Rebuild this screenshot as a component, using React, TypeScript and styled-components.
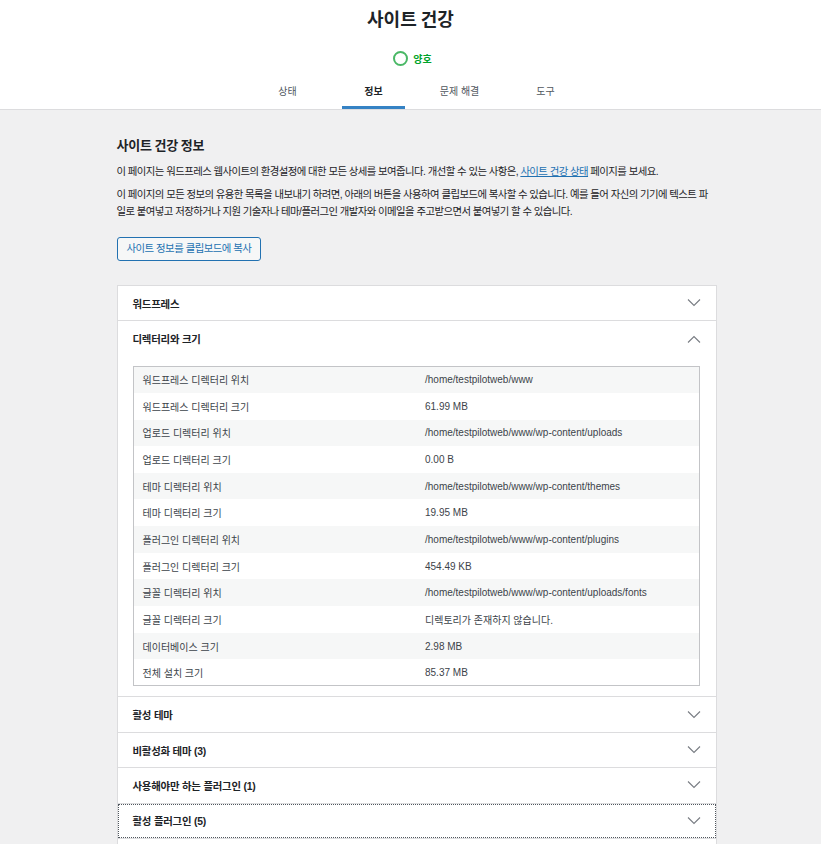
import React from "react";
import styled, { createGlobalStyle, css } from "styled-components";

const Global = createGlobalStyle`
  html, body { margin: 0; padding: 0; background: #f0f0f1; }
  body { font-family: "Liberation Sans", "Noto Sans CJK KR", sans-serif; color: #1d2327; font-size: 10.4px; }
  * { box-sizing: border-box; }
`;

const Header = styled.header`
  background: #fff;
  border-bottom: 1px solid #dcdcde;
  text-align: center;
`;

const Title = styled.h1`
  margin: 0;
  padding-top: 6px;
  font-family: "Noto Sans CJK KR", sans-serif;
  font-size: 18px;
  line-height: 24px;
  font-weight: 700;
  color: #1d2327;
`;

const Status = styled.div`
  margin-top: 20px;
  display: flex;
  justify-content: center;
  align-items: center;
  gap: 5px;
  padding-left: 4px;
  height: 16px;
  color: #00a32a;
  font-weight: 700;
  font-size: 10px;
`;

const Ring = styled.span`
  width: 15px;
  height: 15px;
  border-radius: 50%;
  border: 2px solid #4ab866;
`;

const Tabs = styled.nav`
  margin-top: 12px;
  padding-left: 12px;
  display: flex;
  justify-content: center;
`;

const TabGrid = styled.div`
  display: grid;
  grid-template-columns: repeat(4, 86px);
`;

const Tab = styled.a<{ $active?: boolean }>`
  margin: 0 11.5px;
  display: block;
  padding: 7px 0 7px;
  font-size: 10px;
  line-height: 14px;
  color: #50575e;
  text-decoration: none;
  border-bottom: 3px solid transparent;
  ${(p) =>
    p.$active &&
    css`
      color: #1d2327;
      font-weight: 700;
      border-bottom-color: #3582c4;
    `}
`;

const Body = styled.main`
  padding-left: 12px;
  display: flex;
  justify-content: center;
`;

const Content = styled.div`
  width: 600px;
  padding-top: 26px;
`;

const H2 = styled.h2`
  margin: 0;
  font-family: "Noto Sans CJK KR", sans-serif;
  font-size: 13px;
  line-height: 18px;
  font-weight: 700;
  letter-spacing: -0.2px;
`;

const P = styled.p`
  margin: 0;
  font-size: 10.4px;
  line-height: 17px;
  color: #1d2327;
  letter-spacing: -0.56px;
  word-break: break-all;
  & + & { margin-top: 6px; }
`;

const Intro = styled.div`
  margin-top: 9px;
`;

const Link = styled.a`
  color: #2271b1;
  text-decoration: underline;
`;

const CopyButton = styled.button`
  margin-top: 17px;
  height: 24px;
  padding: 0 9px;
  background: #f6f7f7;
  border: 1px solid #2271b1;
  border-radius: 3px;
  color: #2271b1;
  font-family: inherit;
  font-size: 10.4px;
  letter-spacing: -0.5px;
  line-height: 22px;
`;

const Accordion = styled.div`
  margin-top: 24px;
  background: #fff;
  border: 1px solid #dcdcde;
  border-bottom: none;
`;

const Section = styled.div`
  border-bottom: 1px solid #dcdcde;
`;

const Trigger = styled.div<{ $focus?: boolean }>`
  display: flex;
  align-items: center;
  justify-content: space-between;
  height: 34.4px;
  padding: 0 15px;
  font-size: 10.4px;
  font-weight: 700;
  letter-spacing: -0.2px;
  color: #1d2327;
  ${(p) =>
    p.$focus &&
    css`
      outline: 1px dotted #50575e;
      outline-offset: -1px;
    `}
`;

const Panel = styled.div`
  padding: 10px 16px 10px 15px;
`;

const Table = styled.table`
  width: 100%;
  border-collapse: collapse;
  border: 1px solid #c3c4c7;
  table-layout: fixed;
`;

const Row = styled.tr`
  &:nth-child(odd) { background: #f6f7f7; }
`;

const Cell = styled.td`
  height: 26.65px;
  padding: 0 9px;
  font-size: 10px;
  color: #3c434a;
  vertical-align: middle;
`;

const Chevron = ({ up }: { up?: boolean }) => (
  <svg width="14" height="8" viewBox="0 0 14 8" fill="none">
    <path
      d={up ? "M1 7.5 L7 1.5 L13 7.5" : "M1 0.5 L7 6.5 L13 0.5"}
      stroke="#787c82"
      strokeWidth="1.1"
    />
  </svg>
);

const rows: [string, string][] = [
  ["워드프레스 디렉터리 위치", "/home/testpilotweb/www"],
  ["워드프레스 디렉터리 크기", "61.99 MB"],
  ["업로드 디렉터리 위치", "/home/testpilotweb/www/wp-content/uploads"],
  ["업로드 디렉터리 크기", "0.00 B"],
  ["테마 디렉터리 위치", "/home/testpilotweb/www/wp-content/themes"],
  ["테마 디렉터리 크기", "19.95 MB"],
  ["플러그인 디렉터리 위치", "/home/testpilotweb/www/wp-content/plugins"],
  ["플러그인 디렉터리 크기", "454.49 KB"],
  ["글꼴 디렉터리 위치", "/home/testpilotweb/www/wp-content/uploads/fonts"],
  ["글꼴 디렉터리 크기", "디렉토리가 존재하지 않습니다."],
  ["데이터베이스 크기", "2.98 MB"],
  ["전체 설치 크기", "85.37 MB"],
];

const after = [
  "활성 테마",
  "비활성화 테마 (3)",
  "사용해야만 하는 플러그인 (1)",
  "활성 플러그인 (5)",
  "비활성화 플러그인 (2)",
  "미디어 처리",
  "서버",
  "데이터베이스",
];

export default function App() {
  return (
    <>
      <Global />
      <Header>
        <Title>사이트 건강</Title>
        <Status>
          <Ring />
          <span>양호</span>
        </Status>
        <Tabs>
          <TabGrid>
            <Tab>상태</Tab>
            <Tab $active>정보</Tab>
            <Tab>문제 해결</Tab>
            <Tab>도구</Tab>
          </TabGrid>
        </Tabs>
      </Header>
      <Body>
        <Content>
          <H2>사이트 건강 정보</H2>
          <Intro>
            <P>
              이 페이지는 워드프레스 웹사이트의 환경설정에 대한 모든 상세를 보여줍니다. 개선할 수 있는 사항은,{" "}
              <Link>사이트 건강 상태</Link> 페이지를 보세요.
            </P>
            <P>
              이 페이지의 모든 정보의 유용한 목록을 내보내기 하려면, 아래의 버튼을 사용하여 클립보드에 복사할 수 있습니다. 예를 들어 자신의 기기에 텍스트 파일로 붙여넣고 저장하거나 지원 기술자나 테마/플러그인 개발자와 이메일을 주고받으면서 붙여넣기 할 수 있습니다.
            </P>
          </Intro>
          <CopyButton>사이트 정보를 클립보드에 복사</CopyButton>
          <Accordion>
            <Section>
              <Trigger>
                <span>워드프레스</span>
                <Chevron />
              </Trigger>
            </Section>
            <Section>
              <Trigger>
                <span>디렉터리와 크기</span>
                <Chevron up />
              </Trigger>
              <Panel>
                <Table>
                  <tbody>
                    {rows.map(([k, v]) => (
                      <Row key={k}>
                        <Cell>{k}</Cell>
                        <Cell>{v}</Cell>
                      </Row>
                    ))}
                  </tbody>
                </Table>
              </Panel>
            </Section>
            {after.map((t) => (
              <Section key={t}>
                <Trigger $focus={t === "활성 플러그인 (5)"}>
                  <span>{t}</span>
                  <Chevron />
                </Trigger>
              </Section>
            ))}
          </Accordion>
        </Content>
      </Body>
    </>
  );
}
